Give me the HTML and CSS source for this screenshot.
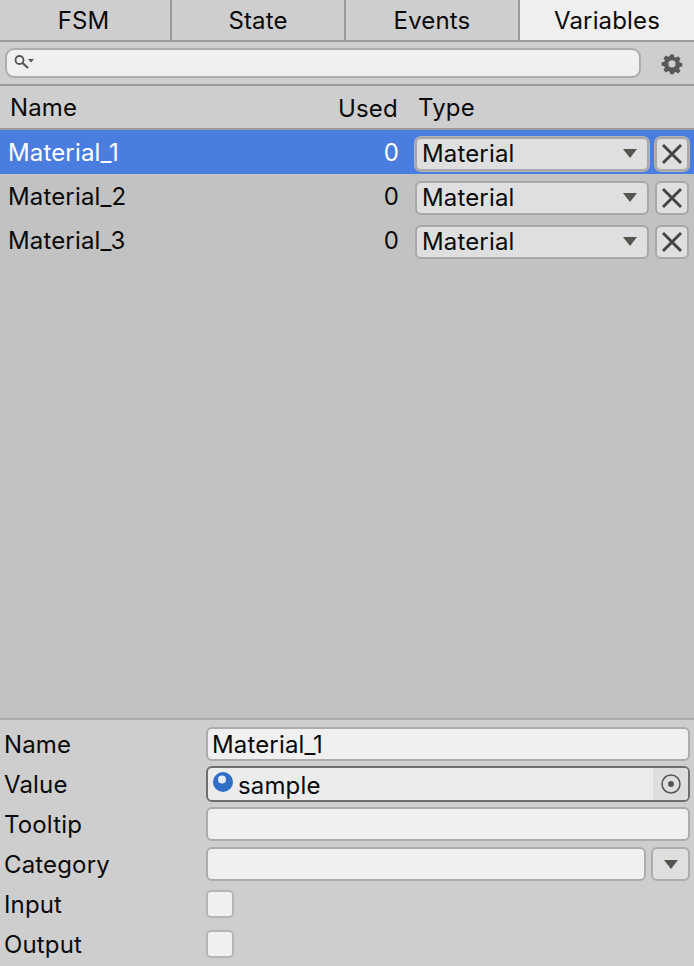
FILE: index.html
```html
<!DOCTYPE html>
<html lang="en">

<head>
    <meta charset="UTF-8">
    <title>FSM Variables</title>
    <link rel="stylesheet" href="styles.css">
</head>

<body>

    <div class="wrapper">
        <div class="tabs">
            <div class="tabs__item">FSM</div>
            <div class="tabs__item">State</div>
            <div class="tabs__item">Events</div>
            <div class="tabs__item tabs__item--active">Variables</div>
        </div>

        <div class="toolbar">
            <div class="search">
                <svg class="search__icon" width="24" height="18" viewBox="0 0 24 18">
                    <circle cx="5.500" cy="6" r="4" fill="none" stroke="#555" stroke-width="1.800" />
                    <path d="M8.500 9l5.500 5" stroke="#555" stroke-width="2.200" />
                    <path d="M14 5h6l-3 3.500z" fill="#555" />
                </svg>
            </div>
            <svg class="toolbar__gear" width="22" height="22" viewBox="0 0 22 22">
                <path fill="#585858" fill-rule="evenodd" d="M9 1h4l.6 2.900 1.600.7L17.700 3l2.800 2.800-1.600 2.500.7 1.700 2.900.6v3.800l-2.900.6-.7 1.700 1.600 2.500-2.800 2.800-2.500-1.600-1.600.7L13 23H9l-.6-2.900-1.600-.7L4.300 21l-2.800-2.800 1.600-2.500-.7-1.700L-.5 13.400V9.600l2.900-.6.7-1.700L1.500 4.800 4.300 2l2.500 1.600 1.600-.7zM11 7.500a4 4 0 1 0 0 8 4 4 0 0 0 0-8z" transform="translate(1.100 .6) scale(.9)" />
            </svg>
        </div>

        <div class="head">
            <div class="head__name">Name</div>
            <div class="head__used">Used</div>
            <div class="head__type">Type</div>
        </div>

        <div class="list">
            <div class="row row--selected">
                <div class="row__name">Material_1</div>
                <div class="row__used">0</div>
                <div class="select">
                    <span>Material</span>
                    <span class="arrow"></span>
                </div>
                <div class="remove">
                    <svg width="24" height="24" viewBox="0 0 24 24">
                        <path d="M3 3l18 18M21 3L3 21" stroke="#444" stroke-width="3" />
                    </svg>
                </div>
            </div>
            <div class="row">
                <div class="row__name">Material_2</div>
                <div class="row__used">0</div>
                <div class="select">
                    <span>Material</span>
                    <span class="arrow"></span>
                </div>
                <div class="remove">
                    <svg width="24" height="24" viewBox="0 0 24 24">
                        <path d="M3 3l18 18M21 3L3 21" stroke="#444" stroke-width="3" />
                    </svg>
                </div>
            </div>
            <div class="row">
                <div class="row__name">Material_3</div>
                <div class="row__used">0</div>
                <div class="select">
                    <span>Material</span>
                    <span class="arrow"></span>
                </div>
                <div class="remove">
                    <svg width="24" height="24" viewBox="0 0 24 24">
                        <path d="M3 3l18 18M21 3L3 21" stroke="#444" stroke-width="3" />
                    </svg>
                </div>
            </div>
        </div>

        <div class="props">
            <div class="prop">
                <div class="prop__label">Name</div>
                <div class="field"><span class="field__text">Material_1</span></div>
            </div>
            <div class="prop">
                <div class="prop__label">Value</div>
                <div class="field field--object">
                    <svg class="field__ball" width="20" height="20" viewBox="0 0 20 20">
                        <circle cx="10" cy="10" r="10" fill="#2f6fc8" />
                        <circle cx="9" cy="7.500" r="4" fill="#e4ecf6" />
                    </svg>
                    <span class="field__text field__text--object">sample</span>
                    <div class="field__picker">
                        <svg width="20" height="20" viewBox="0 0 20 20">
                            <circle cx="10" cy="10" r="9" fill="none" stroke="#555" stroke-width="1.500" />
                            <circle cx="10" cy="10" r="3" fill="#555" />
                        </svg>
                    </div>
                </div>
            </div>
            <div class="prop">
                <div class="prop__label">Tooltip</div>
                <div class="field"></div>
            </div>
            <div class="prop">
                <div class="prop__label">Category</div>
                <div class="field field--short"></div>
                <div class="drop"><span class="arrow"></span></div>
            </div>
            <div class="prop">
                <div class="prop__label">Input</div>
                <div class="check"></div>
            </div>
            <div class="prop">
                <div class="prop__label">Output</div>
                <div class="check"></div>
            </div>
        </div>
    </div>

</body>

</html>
```

FILE: styles.css
```css
* {
    margin: 0;
    padding: 0;
    box-sizing: border-box;
}

:root {
    --panel: #cecece;
    --line: #9a9a9a;
    --field: #f0f0f0;
    --text: #0a0a0a;
}

body {
    font-family: Inter, "Noto Sans", sans-serif;
    font-size: 24px;
    letter-spacing: 0.15px;
    color: var(--text);
    background: var(--panel);
}

.wrapper {
    display: flex;
    flex-direction: column;
    width: 694px;
    height: 966px;
    overflow: hidden;
}

.tabs {
    display: flex;
    height: 42px;
    border-bottom: 2px solid var(--line);
}

.tabs__item {
    width: 174px;
    display: flex;
    align-items: center;
    justify-content: center;
    padding-top: 1px;
    border-right: 2px solid var(--line);
}

.tabs__item:first-child {
    width: 172px;
    padding-right: 3px;
}

.tabs__item--active {
    background: #efefef;
    border-right: none;
}

.toolbar {
    display: flex;
    align-items: center;
    height: 44px;
    padding-left: 5px;
    border-bottom: 2px solid var(--line);
}

.search {
    display: flex;
    align-items: center;
    width: 636px;
    height: 30px;
    padding-left: 7px;
    background: var(--field);
    border: 2px solid #acacac;
    border-radius: 9px;
}

.toolbar__gear {
    margin: 2px 0 0 20px;
}

.head {
    display: flex;
    align-items: center;
    height: 44px;
    padding-left: 10px;
    border-bottom: 2px solid var(--line);
}

.head__name {
    width: 328px;
}

.head__used {
    width: 80px;
    padding-top: 3px;
}

.list {
    flex: 1;
    background: #c2c2c2;
}

.row {
    display: flex;
    align-items: center;
    height: 44px;
    padding-left: 8px;
}

.row--selected {
    background: #4a7de0;
    color: #fff;
}

.row--selected .select,
.row--selected .remove {
    box-shadow: 0 0 0 1px #b4b4b4;
}

.row__name {
    width: 361px;
    padding-top: 1px;
}

.row__used {
    width: 30px;
    padding-top: 1px;
    text-align: right;
}

.select {
    display: flex;
    align-items: center;
    justify-content: space-between;
    width: 234px;
    height: 34px;
    margin: 3px 0 0 16px;
    padding: 0 10px 0 5px;
    color: var(--text);
    background: #dfdfdf;
    border: 2px solid #a8a8a8;
    border-radius: 6px;
}

.arrow {
    width: 0;
    height: 0;
    border-left: 7.500px solid transparent;
    border-right: 7.500px solid transparent;
    border-top: 9px solid #555550;
}

.remove {
    display: flex;
    align-items: center;
    justify-content: center;
    width: 34px;
    height: 34px;
    margin: 3px 0 0 6px;
    background: #dfdfdf;
    border: 2px solid #a8a8a8;
    border-radius: 6px;
}

.props {
    display: flex;
    flex-direction: column;
    gap: 6px;
    height: 248px;
    padding: 7px 4px 0 4px;
    border-top: 2px solid #acacac;
}

.prop {
    display: flex;
    align-items: center;
    height: 34px;
}

.prop__label {
    width: 202px;
    flex-shrink: 0;
    padding-top: 1px;
}

.field {
    display: flex;
    align-items: center;
    flex: 1;
    height: 34px;
    padding-left: 4px;
    background: var(--field);
    border: 2px solid #acacac;
    border-radius: 6px;
}

.field__text {
    padding-top: 1px;
}

.field--object {
    position: relative;
    height: 36px;
    padding-left: 5px;
    border-color: #6e6e6e;
    background: #ececec;
}

.field__ball {
    margin-top: -4px;
}

.field__text--object {
    margin-left: 5px;
    padding-top: 2px;
}

.field__picker {
    position: absolute;
    top: 0;
    right: 0;
    bottom: 0;
    display: flex;
    align-items: center;
    justify-content: center;
    width: 35px;
    background: #dedede;
    border-radius: 0 4px 4px 0;
}

.drop {
    display: flex;
    align-items: center;
    justify-content: center;
    width: 39px;
    height: 34px;
    margin-left: 5px;
    background: #dfdfdf;
    border: 2px solid #acacac;
    border-radius: 6px;
}

.check {
    width: 28px;
    height: 28px;
    background: var(--field);
    border: 2px solid #b4b4b4;
    border-radius: 5px;
}
```
